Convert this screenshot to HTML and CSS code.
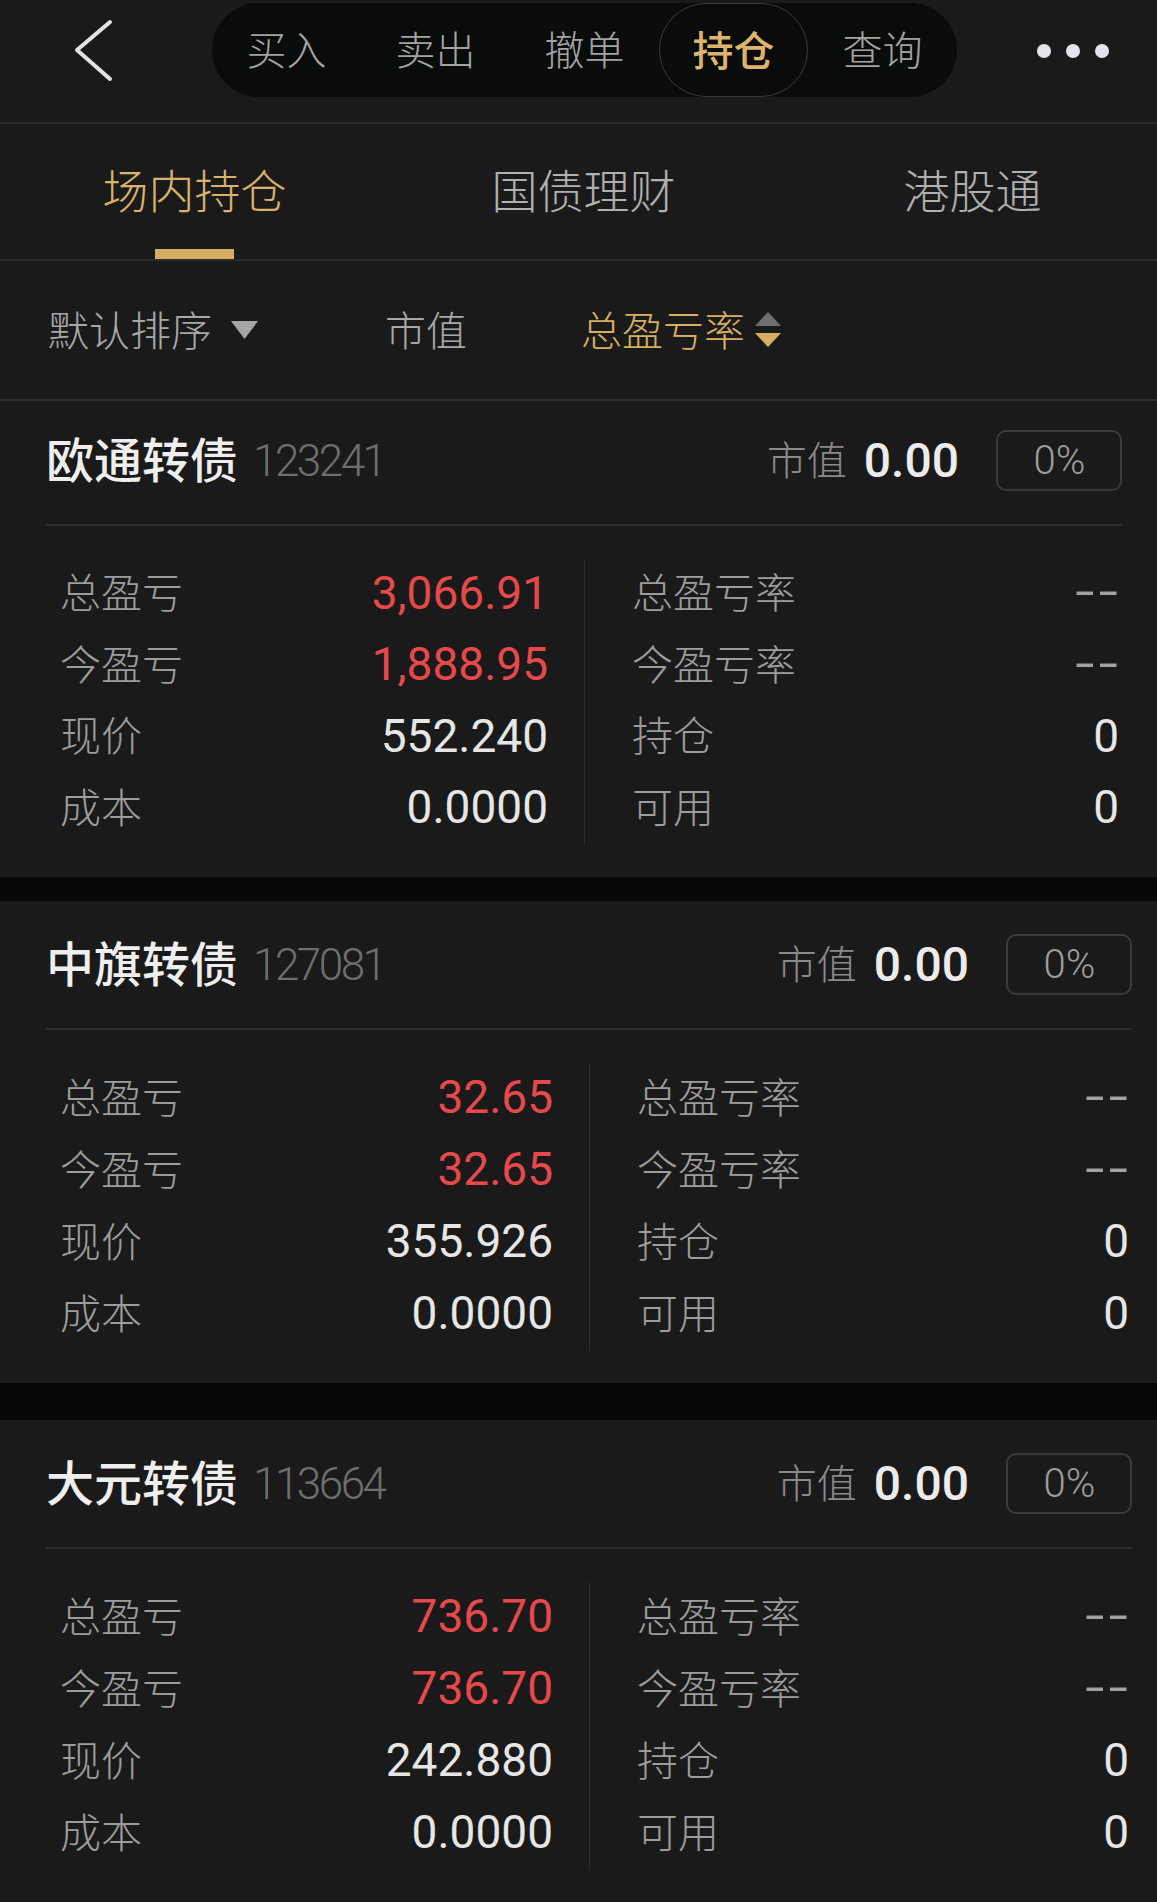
FILE: index.html
```html
<!DOCTYPE html>
<html lang="zh-CN">
<head>
<meta charset="utf-8">
<title>持仓</title>
<link rel="stylesheet" href="styles.css">
</head>
<body>
<header class="nav">
  <div class="back">
    <svg width="40" height="64" viewBox="0 0 40 64"><path d="M36 3 L3 31 L36 60" fill="none" stroke="#e2e2e2" stroke-width="4" stroke-linecap="round" stroke-linejoin="round"/></svg>
  </div>
  <nav class="pill">
    <span class="pill-item">买入</span>
    <span class="pill-item">卖出</span>
    <span class="pill-item">撤单</span>
    <span class="pill-item active">持仓</span>
    <span class="pill-item">查询</span>
  </nav>
  <div class="more"><i class="dot"></i><i class="dot"></i><i class="dot"></i></div>
</header>

<div class="tabs">
  <div class="tab active"><span class="tab-label">场内持仓</span><span class="tab-bar"></span></div>
  <div class="tab"><span class="tab-label">国债理财</span></div>
  <div class="tab"><span class="tab-label">港股通</span></div>
</div>

<div class="sort">
  <span class="sort-default">默认排序</span>
  <svg class="sort-caret" width="27" height="18" viewBox="0 0 27 18"><path d="M0 0 H27 L13.5 18 Z" fill="#a6a6a6"/></svg>
  <span class="sort-mv">市值</span>
  <span class="sort-rate">总盈亏率</span>
  <svg class="sort-arrows" width="26" height="36" viewBox="0 0 26 36"><path d="M13 0 L26 14 H0 Z" fill="#6f6f6f"/><path d="M0 21 H26 L13 35 Z" fill="#d7ae62"/></svg>
</div>

<section class="card card--compact">
  <div class="card-head">
    <span class="title">欧通转债</span><span class="code">123241</span>
    <div class="mv"><span class="mv-label">市值</span><span class="mv-value">0.00</span><span class="pct">0%</span></div>
  </div>
  <div class="card-body">
    <div class="col col-left">
      <div class="row"><span class="label">总盈亏</span><span class="val red">3,066.91</span></div>
      <div class="row"><span class="label">今盈亏</span><span class="val red">1,888.95</span></div>
      <div class="row"><span class="label">现价</span><span class="val">552.240</span></div>
      <div class="row"><span class="label">成本</span><span class="val">0.0000</span></div>
    </div>
    <div class="col col-right">
      <div class="row"><span class="label">总盈亏率</span><span class="val dash">--</span></div>
      <div class="row"><span class="label">今盈亏率</span><span class="val dash">--</span></div>
      <div class="row"><span class="label">持仓</span><span class="val">0</span></div>
      <div class="row"><span class="label">可用</span><span class="val">0</span></div>
    </div>
  </div>
</section>
<div class="gap"></div>

<section class="card">
  <div class="card-head">
    <span class="title">中旗转债</span><span class="code">127081</span>
    <div class="mv"><span class="mv-label">市值</span><span class="mv-value">0.00</span><span class="pct">0%</span></div>
  </div>
  <div class="card-body">
    <div class="col col-left">
      <div class="row"><span class="label">总盈亏</span><span class="val red">32.65</span></div>
      <div class="row"><span class="label">今盈亏</span><span class="val red">32.65</span></div>
      <div class="row"><span class="label">现价</span><span class="val">355.926</span></div>
      <div class="row"><span class="label">成本</span><span class="val">0.0000</span></div>
    </div>
    <div class="col col-right">
      <div class="row"><span class="label">总盈亏率</span><span class="val dash">--</span></div>
      <div class="row"><span class="label">今盈亏率</span><span class="val dash">--</span></div>
      <div class="row"><span class="label">持仓</span><span class="val">0</span></div>
      <div class="row"><span class="label">可用</span><span class="val">0</span></div>
    </div>
  </div>
</section>
<div class="gap gap--wide"></div>

<section class="card">
  <div class="card-head">
    <span class="title">大元转债</span><span class="code">113664</span>
    <div class="mv"><span class="mv-label">市值</span><span class="mv-value">0.00</span><span class="pct">0%</span></div>
  </div>
  <div class="card-body">
    <div class="col col-left">
      <div class="row"><span class="label">总盈亏</span><span class="val red">736.70</span></div>
      <div class="row"><span class="label">今盈亏</span><span class="val red">736.70</span></div>
      <div class="row"><span class="label">现价</span><span class="val">242.880</span></div>
      <div class="row"><span class="label">成本</span><span class="val">0.0000</span></div>
    </div>
    <div class="col col-right">
      <div class="row"><span class="label">总盈亏率</span><span class="val dash">--</span></div>
      <div class="row"><span class="label">今盈亏率</span><span class="val dash">--</span></div>
      <div class="row"><span class="label">持仓</span><span class="val">0</span></div>
      <div class="row"><span class="label">可用</span><span class="val">0</span></div>
    </div>
  </div>
</section>
</body>
</html>
```

FILE: styles.css
```css
* { box-sizing: border-box; margin: 0; padding: 0; }

body {
  background: #1a1a1a;
  width: 1157px;
  overflow: hidden;
  font-family: Roboto, "Noto Sans CJK SC", sans-serif;
}

/* top navigation */
.nav {
  display: flex;
  align-items: flex-start;
  height: 124px;
  padding-top: 3px;
  border-bottom: 2px solid #2a2a2a;
}
.back {
  width: 212px;
  height: 94px;
  padding: 16px 0 0 74px;
}
.back svg { display: block; }
.pill {
  display: flex;
  width: 745px;
  height: 94px;
  background: #0a0c0b;
  border-radius: 47px;
}
.pill-item {
  width: 149px;
  display: flex;
  align-items: center;
  justify-content: center;
  padding-bottom: 4px;
  font-family: "Noto Sans CJK SC", sans-serif;
  font-weight: 300;
  font-size: 40px;
  color: #a3a3a3;
  border-radius: 47px;
}
.pill-item.active {
  color: #dcb46e;
  font-weight: 500;
  font-size: 41px;
  border: 1px solid #393a39;
}
.more {
  display: flex;
  gap: 15px;
  margin: 41px 0 0 80px;
}
.dot {
  display: block;
  width: 14px;
  height: 14px;
  border-radius: 50%;
  background: #e6e4ea;
}

/* sub tabs */
.tabs {
  display: grid;
  grid-template-columns: repeat(3, 389px);
  height: 137px;
  border-bottom: 2px solid #2a2a2a;
}
.tab {
  display: flex;
  flex-direction: column;
  align-items: center;
  font-family: "Noto Sans CJK SC", sans-serif;
  font-weight: 300;
  font-size: 46px;
  color: #b0b0b0;
}
.tab.active { color: #d9b36c; }
.tab-label {
  line-height: 46px;
  margin-top: 41px;
}
.tab-bar {
  margin-top: auto;
  width: 79px;
  height: 10px;
  background: #d6ae63;
}

/* sort row */
.sort {
  display: flex;
  align-items: center;
  height: 140px;
  padding-left: 48px;
  border-bottom: 2px solid #2a2c2e;
  font-family: "Noto Sans CJK SC", sans-serif;
  font-weight: 300;
  font-size: 41px;
  color: #a8a8a8;
}
.sort span { padding-bottom: 5px; }
.sort-caret { margin-left: 19px; }
.sort-mv { margin-left: 127px; }
.sort-rate { margin-left: 114px; color: #d6ae66; }
.sort-arrows { margin-left: 10px; }

/* holdings card */
.card { background: #1a1a1a; }
.card-head {
  display: flex;
  align-items: center;
  height: 129px;
  margin: 0 25px 0 46px;
  border-bottom: 2px solid #2b2d2e;
}
.title {
  padding-bottom: 7px;
  font-family: "Noto Sans CJK SC", sans-serif;
  font-weight: 500;
  font-size: 48px;
  color: #eeeeee;
}
.code {
  margin-left: 15px;
  font-family: Roboto, sans-serif;
  font-weight: 300;
  font-size: 44px;
  letter-spacing: -2.5px;
  color: #6e6e6e;
}
.mv {
  margin-left: auto;
  display: flex;
  align-items: center;
}
.mv-label {
  padding-bottom: 5px;
  font-family: "Noto Sans CJK SC", sans-serif;
  font-weight: 300;
  font-size: 40px;
  color: #8a8a8a;
}
.mv-value {
  margin-left: 17px;
  font-family: Roboto, sans-serif;
  font-weight: 500;
  font-size: 48px;
  color: #ececec;
}
.pct {
  margin-left: 37px;
  width: 126px;
  height: 61px;
  border: 2px solid #3a3a3a;
  border-radius: 10px;
  display: flex;
  align-items: center;
  justify-content: center;
  padding-left: 1px;
  font-family: Roboto, sans-serif;
  font-weight: 300;
  font-size: 40px;
  color: #9c9c9c;
}

.card-body {
  display: grid;
  grid-template-columns: 1fr 1fr;
  margin: 0 25px 0 46px;
  padding: 33px 0 32px;
}
.col { display: flex; flex-direction: column; }
.col-right { border-left: 1px solid #2e2e2e; }
.row {
  height: 72px;
  display: flex;
  align-items: center;
  justify-content: space-between;
}
.col-left .row { padding: 0 36px 0 14px; }
.col-right .row { padding: 0 3px 0 47px; }
.label {
  padding-bottom: 9px;
  font-family: "Noto Sans CJK SC", sans-serif;
  font-weight: 300;
  font-size: 41px;
  color: #9d9d9d;
}
.val {
  padding-bottom: 4px;
  font-family: Roboto, sans-serif;
  font-weight: 400;
  font-size: 46px;
  color: #e6e6e6;
}
.val.red { color: #e5494b; }
.val.dash {
  display: inline-block;
  padding-bottom: 7px;
  letter-spacing: 3px;
  margin-right: -3px;
  color: #a2a2a2;
  transform: scaleX(1.5);
  transform-origin: right center;
}

/* first card is rendered slightly tighter */
.card--compact .card-head {
  height: 125px;
  padding-bottom: 4px;
  margin-right: 35px;
}
.card--compact .card-body { margin-right: 35px; }
.card--compact .row { height: 71.5px; }

.gap { height: 24px; background: #060807; }
.gap--wide { height: 37px; }
```
